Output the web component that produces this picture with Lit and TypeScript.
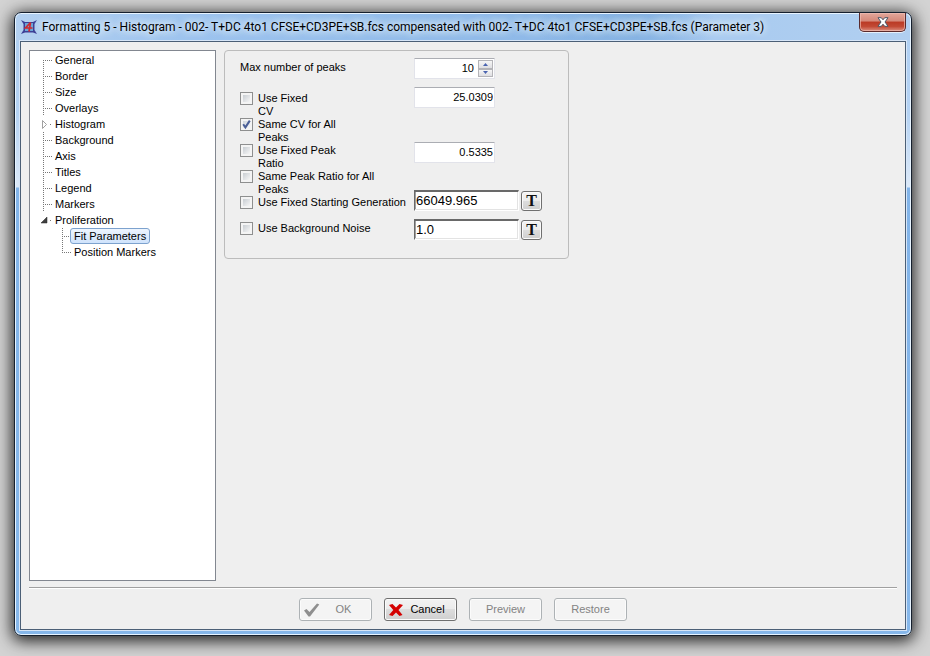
import { LitElement, html, css, svg, nothing } from "lit";
import { customElement } from "lit/decorators.js";
import { classMap } from "lit/directives/class-map.js";

interface TreeNode {
  label: string;
  guide: "first" | "middle" | "last" | "closed" | "open";
  selected?: boolean;
  children?: TreeNode[];
}

const TREE: TreeNode[] = [
  { label: "General", guide: "first" },
  { label: "Border", guide: "middle" },
  { label: "Size", guide: "middle" },
  { label: "Overlays", guide: "middle" },
  { label: "Histogram", guide: "closed" },
  { label: "Background", guide: "middle" },
  { label: "Axis", guide: "middle" },
  { label: "Titles", guide: "middle" },
  { label: "Legend", guide: "middle" },
  { label: "Markers", guide: "middle" },
  {
    label: "Proliferation",
    guide: "open",
    children: [
      { label: "Fit Parameters", guide: "middle", selected: true },
      { label: "Position Markers", guide: "last" },
    ],
  },
];

const OPTIONS = [
  { id: "cv", lines: ["Use Fixed", "CV"], checked: false },
  { id: "same-cv", lines: ["Same CV for All", "Peaks"], checked: true },
  { id: "ratio", lines: ["Use Fixed Peak", "Ratio"], checked: false },
  { id: "same-ratio", lines: ["Same Peak Ratio for All", "Peaks"], checked: false },
  { id: "start", lines: ["Use Fixed Starting Generation"], checked: false },
  { id: "noise", lines: ["Use Background Noise"], checked: false },
];

@customElement("settings-tree")
class SettingsTree extends LitElement {
  static styles = css`
    :host {
      display: block;
      box-sizing: border-box;
      background: #fff;
      border: 1px solid #828790;
      padding: 1px 12px;
      color: #000;
    }
    .list {
      list-style: none;
      margin: 0;
      padding: 0;
    }
    .list .list {
      padding-left: 19px;
    }
    .row {
      display: flex;
      align-items: center;
      height: 16px;
      white-space: nowrap;
    }
    .guide {
      flex: none;
      width: 9px;
      height: 16px;
    }
    .label {
      box-sizing: border-box;
      height: 16px;
      line-height: 14px;
      padding: 0 3px;
      border: 1px solid transparent;
      border-radius: 3px;
    }
    .selected {
      border-color: #7da2ce;
      background: linear-gradient(#eef5fe, #cfe3fc);
    }
  `;

  guide(kind: TreeNode["guide"]) {
    const dots = (d: string) =>
      svg`<path d=${d} stroke="#777" stroke-dasharray="1 1" fill="none"></path>`;
    const parts = {
      first: [dots("M1.5 8V16"), dots("M1 8.5H10")],
      middle: [dots("M1.5 0V16"), dots("M1 8.5H10")],
      last: [dots("M1.5 0V8"), dots("M1 8.5H10")],
      closed: [
        svg`<path d="M0.5 4.5L4.5 8.5L0.5 12.5Z" fill="#fff" stroke="#a0a0a0"></path>`,
        svg`<rect x="8" y="8" width="1" height="1" fill="#777"></rect>`,
      ],
      open: [
        svg`<path d="M5 5V11H-1Z" fill="#404040" stroke="#262626" stroke-width="0.5"></path>`,
        svg`<rect x="8" y="8" width="1" height="1" fill="#777"></rect>`,
      ],
    };
    return html`<svg class="guide" viewBox="0 0 9 16" overflow="visible" aria-hidden="true">${parts[kind]}</svg>`;
  }

  items(nodes: TreeNode[], role: string): unknown {
    return html`<ul class="list" role=${role}>
      ${nodes.map(
        (n) => html`<li role="treeitem" aria-selected=${n.selected ? "true" : "false"}>
          <div class="row">${this.guide(n.guide)}<span class=${classMap({ label: true, selected: !!n.selected })}>${n.label}</span></div>
          ${n.children ? this.items(n.children, "group") : nothing}
        </li>`
      )}
    </ul>`;
  }

  render() {
    return this.items(TREE, "tree");
  }
}

@customElement("fit-panel")
class FitPanel extends LitElement {
  static styles = css`
    :host {
      display: block;
    }
    .group {
      box-sizing: border-box;
      max-width: 345px;
      margin: 0;
      padding: 7px 15px 10px 15px;
      border: 1px solid #bcbcbc;
      border-radius: 4px;
      display: grid;
      grid-template-columns: 174px 1fr;
    }
    .options {
      display: flex;
      flex-direction: column;
      padding-top: 3px;
      line-height: 13px;
      white-space: nowrap;
    }
    .caption {
      margin-bottom: 18px;
    }
    .option {
      display: flex;
      gap: 5px;
      height: 26px;
    }
    .line {
      display: block;
    }
    .tick {
      appearance: none;
      flex: none;
      box-sizing: border-box;
      width: 13px;
      height: 13px;
      margin: 0;
      border: 1px solid #8e8f8f;
      background: linear-gradient(135deg, #c8cdd2, #f6f6f6) 2px 2px / 7px 7px no-repeat #f4f4f4;
    }
    .tick:checked {
      background: url("data:image/svg+xml,%3Csvg xmlns='http://www.w3.org/2000/svg' viewBox='0 0 11 11'%3E%3Cpath d='M2.2 5.2L4.4 8.4L8.8 1.6' fill='none' stroke='%234a5f97' stroke-width='2'/%3E%3C/svg%3E") center / 11px 11px no-repeat,
        linear-gradient(135deg, #cfd6de, #f6f6f6) 2px 2px / 7px 7px no-repeat #f4f4f4;
    }
    .fields {
      display: flex;
      flex-direction: column;
      gap: 8px;
    }
    .number {
      display: flex;
      box-sizing: border-box;
      width: 81px;
      height: 21px;
      padding: 1px;
      background: #fff;
      border: 1px solid #e2e3ea;
      border-top-color: #abadb3;
      border-radius: 1px;
    }
    .wide {
      margin-bottom: 26px;
    }
    .near {
      margin-bottom: 19px;
    }
    .value {
      flex: 1;
      min-width: 0;
      border: 0;
      margin: 0;
      padding: 0;
      outline: 0;
      background: transparent;
      font: inherit;
      color: #000;
      text-align: right;
    }
    .number .value {
      height: 16px;
    }
    .spin {
      display: flex;
      flex-direction: column;
      width: 15px;
      margin-left: 4px;
    }
    .step {
      flex: 1;
      display: flex;
      align-items: center;
      justify-content: center;
      min-height: 0;
      padding: 0;
      border: 1px solid #b4b4b8;
      background: linear-gradient(#f6f6f6, #dedee2);
    }
    .pair {
      display: flex;
      align-items: center;
      gap: 2px;
    }
    .sunken {
      box-sizing: border-box;
      display: flex;
      width: 105px;
      height: 21px;
      padding: 0 0 0 1px;
      background: #fff;
      border: 1px solid #fff;
      border-top: 2px solid #696969;
      border-left-color: #696969;
      box-shadow: inset -1px -1px #e3e3e3, inset 1px 0 #a0a0a0;
    }
    .sunken .value {
      font: 13px/16px "Liberation Sans", Arial, sans-serif;
      text-align: left;
    }
    .text {
      width: 21px;
      height: 20px;
      padding: 0;
      border: 1px solid #707070;
      border-radius: 3px;
      background: linear-gradient(#f4f4f4, #ececec 49%, #dddddd 50%, #cfcfcf);
      box-shadow: inset 0 0 0 1px #fafafa;
      font: bold 16px/17px "Liberation Serif", serif;
      color: #111;
    }
  `;

  textRow(label: string, value: string) {
    return html`<div class="pair">
      <div class="sunken"><input class="value" aria-label=${label} .value=${value} /></div>
      <button class="text" aria-label="${label} formula">T</button>
    </div>`;
  }

  render() {
    return html`<fieldset class="group" aria-label="Fit Parameters">
      <div class="options">
        <label class="caption" for="peaks">Max number of peaks</label>
        ${OPTIONS.map(
          (o) => html`<label class="option">
            <input class="tick" type="checkbox" id=${o.id} .checked=${o.checked} />
            <span>${o.lines.map((l) => html`<span class="line">${l}</span>`)}</span>
          </label>`
        )}
      </div>
      <div class="fields">
        <div class="number">
          <input class="value" id="peaks" .value=${"10"} />
          <span class="spin">
            <button class="step" aria-label="More"><svg width="5" height="3" viewBox="0 0 5 3"><path d="M0 3L2.5 0L5 3Z" fill="#4a64b0"></path></svg></button>
            <button class="step" aria-label="Fewer"><svg width="5" height="3" viewBox="0 0 5 3"><path d="M0 0L2.5 3L5 0Z" fill="#4a64b0"></path></svg></button>
          </span>
        </div>
        <div class="number wide"><input class="value" aria-label="Fixed CV" .value=${"25.0309"} /></div>
        <div class="number near"><input class="value" aria-label="Fixed Peak Ratio" .value=${"0.5335"} /></div>
        ${this.textRow("Starting Generation", "66049.965")}
        ${this.textRow("Background Noise", "1.0")}
      </div>
    </fieldset>`;
  }
}

@customElement("app-root")
class AppRoot extends LitElement {
  static styles = css`
    :host {
      display: flex;
      box-sizing: border-box;
      min-height: 100vh;
      padding: 12px 18px 20px 14px;
      background: #d3d3d3;
      font: 11px/13px "Liberation Sans", Arial, sans-serif;
      color: #000;
      overflow: hidden;
    }
    .window {
      flex: 1;
      display: flex;
      flex-direction: column;
      box-sizing: border-box;
      min-width: 0;
      padding: 0 5px 5px;
      border: 1px solid #16202e;
      border-radius: 7px;
      background:
        radial-gradient(ellipse 90px 50px at 610px 10px, #7faede88, transparent) no-repeat,
        linear-gradient(90deg, #b3d0f0, #9cc3ee 20%, #8ab6e6 70%, #a9cbf0 78%, #b1cff0) 0 0 / 100% 28px no-repeat,
        linear-gradient(#afcff2, #b4d2f3 100px, #dce9f8 174px, #82b4e9 175px, #86b7ea);
      box-shadow: inset 0 0 0 1px #e8f4ff, 0 3px 16px 2px rgba(0, 0, 0, 0.85);
    }
    .title-bar {
      display: flex;
      align-items: flex-start;
      height: 28px;
      padding-left: 1px;
    }
    .logo {
      flex: none;
      width: 16px;
      height: 16px;
      margin: 6px 5px 0 0;
    }
    .title {
      flex: 1;
      min-width: 0;
      margin: 0;
      white-space: nowrap;
      font: 12px/16px Roboto, "Open Sans", sans-serif;
      padding-top: 6px;
      text-shadow: 0 0 6px #e4f0fd, 0 0 8px #dcecfc, 0 0 10px #dcecfc;
    }
    .close {
      box-sizing: border-box;
      display: flex;
      align-items: center;
      justify-content: center;
      width: 47px;
      height: 19px;
      padding: 0;
      border: 1px solid #5a2a2c;
      border-top: 0;
      border-radius: 0 0 5px 5px;
      background: linear-gradient(#e3a79b, #d58879 45%, #bb3a25 50%, #c24a35 75%, #dc8f80);
      box-shadow: inset 0 0 0 1px #eebfb6aa, 0 1px #e6f0fb;
    }
    .client {
      flex: 1;
      display: flex;
      flex-direction: column;
      padding: 8px;
      background: #efefef;
      border: 1px solid #4b5f76;
      box-shadow: 0 0 0 1px #d7e6f8;
    }
    .body {
      flex: 1;
      display: flex;
      gap: 8px;
    }
    .side {
      width: 187px;
      flex: none;
    }
    .panel {
      flex: 1;
      min-width: 0;
    }
    .footer {
      display: flex;
      justify-content: center;
      gap: 12px;
      margin-top: 6px;
      padding-top: 10px;
      border-top: 1px solid #a0a0a0;
      box-shadow: inset 0 1px #fff;
    }
    .button {
      display: flex;
      align-items: center;
      box-sizing: border-box;
      width: 73px;
      height: 23px;
      padding: 0 4px;
      border: 1px solid #707070;
      border-radius: 3px;
      background: linear-gradient(#f2f2f2, #ebebeb 49%, #dddddd 50%, #cfcfcf);
      box-shadow: inset 0 0 0 1px #fbfbfb;
      font: inherit;
      color: #000;
    }
    .button:disabled {
      border-color: #adb2b5;
      background: #f4f4f4;
      color: #838383;
    }
    .caption {
      flex: 1;
      text-align: center;
    }
  `;

  render() {
    return html`<section class="window" role="dialog" aria-labelledby="title">
      <header class="title-bar">
        <svg class="logo" viewBox="0 0 16 16" aria-hidden="true">
          <path d="M0 1L4 3H12L16 1L13.500 5V11L16 15L12 13.500H4L0 15L2.500 11V5Z" fill="#3c3f96"></path>
          <path d="M4 4H12V12H4Z" fill="#6aa6d6"></path>
          <path d="M9.500 3.500L4.500 9H11.500M9.500 3.500L8 12.500" fill="none" stroke="#d02a30" stroke-width="1.700"></path>
        </svg>
        <h1 class="title" id="title">Formatting 5 - Histogram - 002- T+DC 4to1 CFSE+CD3PE+SB.fcs compensated with 002- T+DC 4to1 CFSE+CD3PE+SB.fcs (Parameter 3)</h1>
        <button class="close" aria-label="Close">
          <svg width="12" height="10" viewBox="0 0 12 10">
            <path d="M1 .7H4.300L6 2.800L7.700 .7H11L8 5L11 9.300H7.700L6 7.200L4.300 9.300H1L4 5Z" fill="#fff" stroke="#4c5566"></path>
          </svg>
        </button>
      </header>
      <main class="client">
        <div class="body">
          <settings-tree class="side"></settings-tree>
          <fit-panel class="panel"></fit-panel>
        </div>
        <footer class="footer">
          <button class="button" disabled>
            <svg width="16" height="14" viewBox="0 0 16 14"><path d="M0 7.500L2.500 6L5.500 9L13 .5L15.300 1.500L6 13.500H4.500Z" fill="#8f8f8f"></path></svg>
            <span class="caption">OK</span>
          </button>
          <button class="button">
            <svg width="14" height="12" viewBox="0 0 14 12"><path d="M0 1L3.500 0L7 3.500L10.500 0L14 1L9.500 6L13.500 11L10.500 12L7 8.500L3.500 12L0 11L4.300 6Z" fill="#d40000"></path></svg>
            <span class="caption">Cancel</span>
          </button>
          <button class="button" disabled><span class="caption">Preview</span></button>
          <button class="button" disabled><span class="caption">Restore</span></button>
        </footer>
      </main>
    </section>`;
  }
}
